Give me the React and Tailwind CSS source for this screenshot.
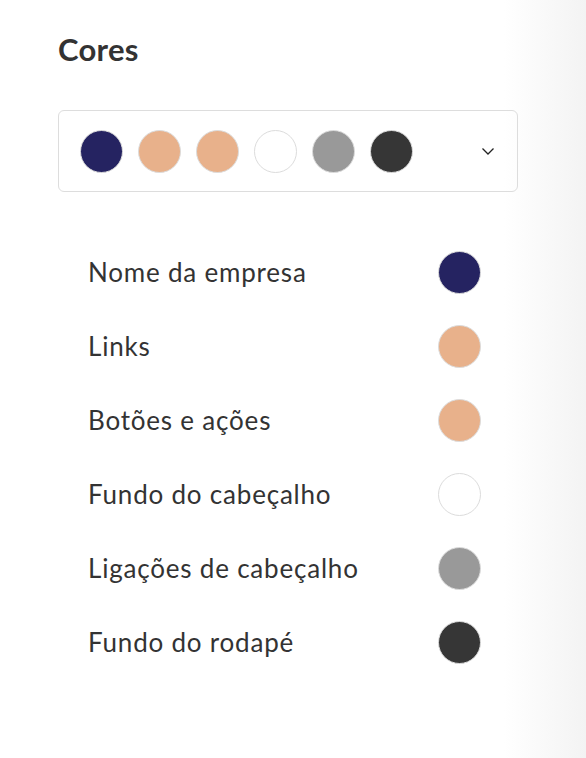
import React from "react";

const palette = ["#252361", "#e8b18b", "#e8b18b", "#ffffff", "#999999", "#363636"];

const rows = [
    { label: "Nome da empresa", color: "#252361" },
    { label: "Links", color: "#e8b18b" },
    { label: "Botões e ações", color: "#e8b18b" },
    { label: "Fundo do cabeçalho", color: "#ffffff" },
    { label: "Ligações de cabeçalho", color: "#999999" },
    { label: "Fundo do rodapé", color: "#363636" },
];

function Swatch({ color }) {
    return (
        <div
            className="w-[43px] h-[43px] rounded-full border border-[#dcdcdc] shrink-0"
            style={{ backgroundColor: color }}
        ></div>
    );
}

export default function App() {
    return (
        <div
            className="w-[586px] h-[758px] bg-[linear-gradient(to_right,#ffffff_86%,#f3f3f3)] text-[#333333]"
            style={{ fontFamily: "Lato, 'Open Sans', sans-serif" }}
        >
            <div className="pl-[58px] pt-[30px] w-[518px]">
                <h2 className="text-[31px] font-bold leading-[38px] tracking-[0.3px]">Cores</h2>

                {/* palette picker */}
                <div className="mt-[42px] h-[82px] border border-[#dddddd] rounded-[6px] flex items-center pl-[21px] pr-[22px]">
                    <div className="flex gap-[15px]">
                        {palette.map((c, i) => (
                            <Swatch key={i} color={c} />
                        ))}
                    </div>
                    <svg className="ml-auto" width="14" height="10" viewBox="0 0 14 10" fill="none">
                        <path d="M1.5 2.5 L7 8 L12.5 2.5" stroke="#222" strokeWidth="1.3" />
                    </svg>
                </div>

                {/* color rows */}
                <div className="mt-[59px] pl-[30px] pr-[37px] flex flex-col gap-[31px]">
                    {rows.map((r) => (
                        <div key={r.label} className="flex items-center justify-between h-[43px]">
                            <span className="text-[26px] tracking-[0.8px]">{r.label}</span>
                            <Swatch color={r.color} />
                        </div>
                    ))}
                </div>
            </div>
        </div>
    );
}
